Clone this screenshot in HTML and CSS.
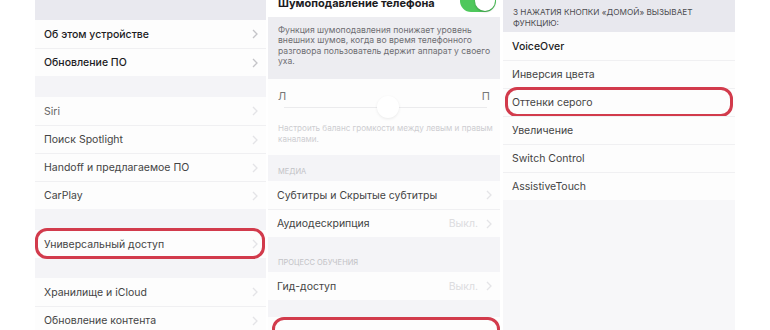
FILE: index.html
```html
<!DOCTYPE html>
<html lang="ru">
<head>
  <meta charset="UTF-8">
  <meta name="viewport" content="width=device-width, initial-scale=1.0">
  <title>Универсальный доступ</title>
  <link rel="stylesheet" href="styles.css">
</head>
<body>
  <main class="shots">

    <!-- screen 1: general settings -->
    <section class="phone">
      <div class="spacer top"></div>
      <ul class="group">
        <li class="row strong">Об этом устройстве<svg class="chev" viewBox="0 0 6 10"><path d="M1 1l4 4-4 4"/></svg></li>
        <li class="row strong">Обновление ПО<svg class="chev" viewBox="0 0 6 10"><path d="M1 1l4 4-4 4"/></svg></li>
      </ul>
      <div class="spacer"></div>
      <ul class="group">
        <li class="row light">Siri<svg class="chev faint" viewBox="0 0 6 10"><path d="M1 1l4 4-4 4"/></svg></li>
        <li class="row">Поиск Spotlight<svg class="chev faint" viewBox="0 0 6 10"><path d="M1 1l4 4-4 4"/></svg></li>
        <li class="row">Handoff и предлагаемое ПО<svg class="chev faint" viewBox="0 0 6 10"><path d="M1 1l4 4-4 4"/></svg></li>
        <li class="row">CarPlay<svg class="chev faint" viewBox="0 0 6 10"><path d="M1 1l4 4-4 4"/></svg></li>
      </ul>
      <div class="spacer"></div>
      <ul class="group">
        <li class="row marked wide">Универсальный доступ<svg class="chev faint" viewBox="0 0 6 10"><path d="M1 1l4 4-4 4"/></svg></li>
      </ul>
      <div class="spacer short"></div>
      <ul class="group">
        <li class="row">Хранилище и iCloud<svg class="chev faint" viewBox="0 0 6 10"><path d="M1 1l4 4-4 4"/></svg></li>
        <li class="row">Обновление контента<svg class="chev faint" viewBox="0 0 6 10"><path d="M1 1l4 4-4 4"/></svg></li>
      </ul>
    </section>

    <!-- screen 2: hearing -->
    <section class="phone">
      <div class="switch-row">
        <span class="switch-title">Шумоподавление телефона</span>
        <span class="toggle"><span class="knob"></span></span>
      </div>
      <p class="note">Функция шумоподавления понижает уровень внешних шумов, когда во время телефонного разговора пользователь держит аппарат у своего уха.</p>
      <div class="balance">
        <div class="balance-labels"><span>Л</span><span>П</span></div>
        <div class="track"><span class="thumb"></span></div>
        <p class="caption">Настроить баланс громкости между левым и правым каналами.</p>
      </div>
      <h2 class="section-title">Медиа</h2>
      <ul class="group">
        <li class="row">Субтитры и Скрытые субтитры<svg class="chev faint" viewBox="0 0 6 10"><path d="M1 1l4 4-4 4"/></svg></li>
        <li class="row">Аудиодескрипция<span class="value">Выкл.<svg class="chev faint" viewBox="0 0 6 10"><path d="M1 1l4 4-4 4"/></svg></span></li>
      </ul>
      <h2 class="section-title tall">Процесс обучения</h2>
      <ul class="group">
        <li class="row">Гид-доступ<span class="value">Выкл.<svg class="chev faint" viewBox="0 0 6 10"><path d="M1 1l4 4-4 4"/></svg></span></li>
      </ul>
      <div class="spacer small"></div>
      <ul class="group">
        <li class="row marked bottom"></li>
      </ul>
    </section>

    <!-- screen 3: triple click -->
    <section class="phone last">
      <p class="list-header">3 нажатия кнопки «Домой» вызывает функцию:</p>
      <ul class="group">
        <li class="row strong">VoiceOver</li>
        <li class="row">Инверсия цвета</li>
        <li class="row marked">Оттенки серого</li>
        <li class="row">Увеличение</li>
        <li class="row">Switch Control</li>
        <li class="row">AssistiveTouch</li>
      </ul>
    </section>

  </main>
</body>
</html>
```

FILE: styles.css
```css
body {
  margin: 0;
  background-color: #fff;
  font-family: Inter, "Noto Sans", sans-serif;
  color: #3a3a3c;
}

.shots {
  display: flex;
  gap: 2px;
  padding-left: 35px;
  height: 330px;
  overflow: hidden;
}

.phone {
  width: 231px;
  height: 330px;
  overflow: hidden;
  background-color: #f4f4f7; /* grouped table background */
}

.phone + .phone {
  width: 232px;
}

.phone.last {
  margin-left: 1px;
  background-color: #f7f7f9;
}

ul.group {
  list-style: none;
  margin: 0;
  padding: 0;
  background-color: #fdfdfd;
}

.spacer {
  height: 21px;
}

.spacer.top {
  height: 20px;
  background-color: #e9e9ef;
}

.spacer.short {
  height: 20px;
}

.spacer.small {
  height: 17px;
}

.row {
  position: relative;
  box-sizing: border-box;
  height: 28px;
  display: flex;
  align-items: center;
  justify-content: space-between;
  padding: 0 8px 0 9px;
  font-size: 10.5px;
  color: #444;
}

.row + .row {
  border-top: 1px solid #f0f0f2;
}

.row.strong {
  color: #1c1c1e;
  font-weight: 500;
}

.row.light {
  color: #666;
}

.chev {
  width: 6px;
  height: 10px;
  fill: none;
  stroke: #c4c4c8;
  stroke-width: 1.3;
}

.chev.faint {
  stroke: #e4e4e7;
}

.value {
  display: flex;
  align-items: center;
  gap: 8px;
  color: #dcdcdf;
}

/* red hand-drawn highlight */
.row.marked::after {
  content: "";
  position: absolute;
  left: 2px;
  right: 2px;
  top: -2px;
  bottom: -1px;
  border: 3px solid #d23b4c;
  border-radius: 12px;
}

.row.wide::after {
  left: 0;
  right: 1px;
}

.row.bottom::after {
  left: 4px;
  right: 0;
  top: 0;
  bottom: -14px;
}

/* screen 2 */
.switch-row {
  height: 28px;
  margin-top: -11px;
  display: flex;
  align-items: center;
  justify-content: space-between;
  padding: 0 4px 0 10px;
  background-color: #fff;
}

.switch-title {
  font-size: 11px;
  font-weight: 700;
  color: #1c1c1e;
}

.toggle {
  position: relative;
  width: 36px;
  height: 22px;
  margin-top: -4px;
  border-radius: 11px;
  background-color: #4fc85c;
}

.knob {
  position: absolute;
  right: 1px;
  top: 1px;
  width: 20px;
  height: 20px;
  border-radius: 50%;
  background-color: #fff;
  box-shadow: 0 1px 2px rgba(0, 0, 0, 0.25);
}

.note {
  box-sizing: border-box;
  height: 62px;
  margin: 0;
  padding: 8px 4px 0 10px;
  background-color: #ededf1;
  font-size: 8.6px;
  line-height: 10.4px;
  color: #6d6d72;
}

.balance {
  height: 76px;
  box-sizing: border-box;
  padding: 11px 10px 0;
  background-color: #fdfdfd;
}

.balance-labels {
  display: flex;
  justify-content: space-between;
  font-size: 11px;
  color: #777;
  line-height: 12px;
}

.track {
  position: relative;
  height: 1px;
  margin: 5px 3px 0 6px;
  background-color: #ebebed;
}

.thumb {
  position: absolute;
  left: 93px;
  top: -11px;
  width: 22px;
  height: 22px;
  border-radius: 50%;
  background-color: #fff;
  box-shadow: 0 1px 3px rgba(0, 0, 0, 0.08);
}

.caption {
  margin: 15px -10px 0 0;
  font-size: 8.1px;
  line-height: 11px;
  color: #cdcdd1;
}

.section-title {
  box-sizing: border-box;
  height: 26px;
  margin: 0;
  padding: 12px 10px 0;
  font-size: 7.5px;
  font-weight: 400;
  text-transform: uppercase;
  color: #c2c2c6;
}

.section-title.tall {
  height: 35px;
  padding-top: 21px;
}

/* screen 3 */
.list-header {
  box-sizing: border-box;
  height: 32px;
  margin: 0;
  padding: 7px 10px 0;
  background-color: #e8e8ee;
  font-size: 8.2px;
  line-height: 11px;
  text-transform: uppercase;
  color: #4c4c50;
}
```
